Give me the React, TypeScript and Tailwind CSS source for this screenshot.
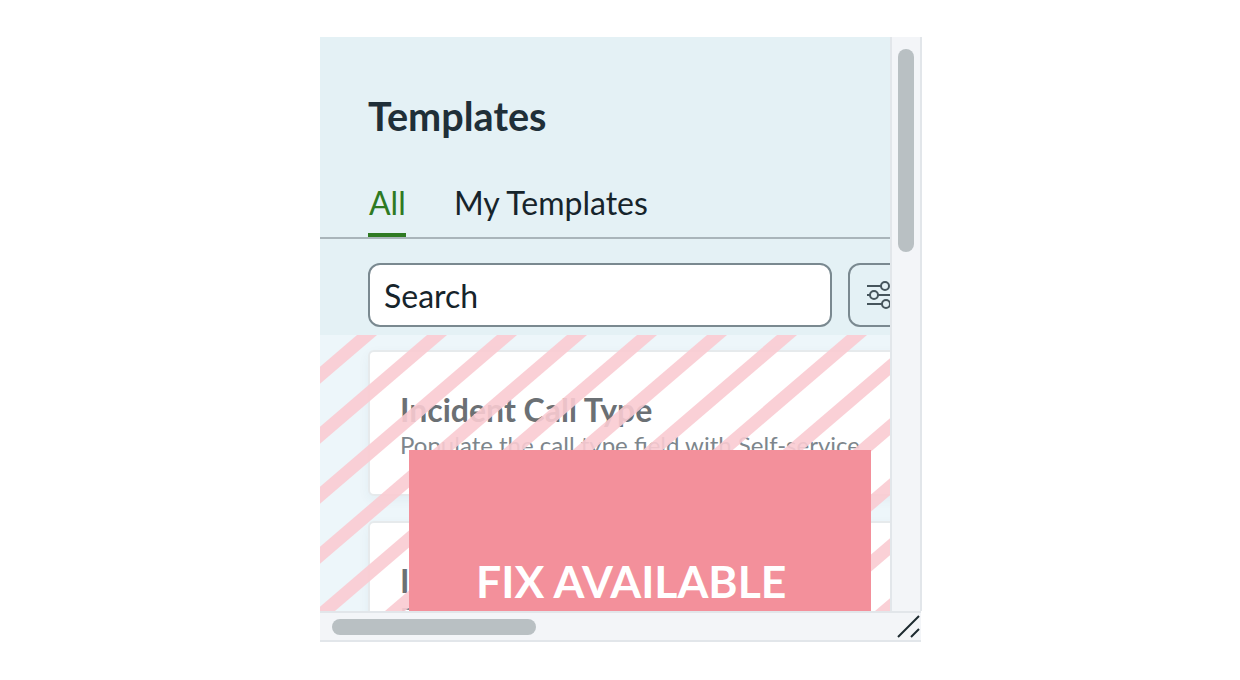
import React from "react";

function Card({ mt }: { mt: string }) {
  return (
    <div className={`${mt} ml-[48px] h-[146px] w-[560px] shrink-0 rounded-[6px] border-2 border-[#e6eaec] bg-white pl-[30px] pt-[38px] shadow-[0_4px_12px_rgba(40,70,90,0.05)]`}>
      <div className="whitespace-nowrap text-[32px] font-bold leading-[40px] text-[#6b7074]">Incident Call Type</div>
      <div className="whitespace-nowrap text-[24px] leading-[30px] text-[#7d868c]">Populate the call type field with Self-service</div>
    </div>
  );
}

export default function App() {
  const stripes = Array.from({ length: 14 }, (_, k) => 47 + 70 * k);
  return (
    <div className="h-[680px] w-[1240px] overflow-hidden bg-white pl-[320px] pt-[37px] font-['Lato','Liberation_Sans',sans-serif]">
      <div className="flex h-[605px] w-[602px] flex-col">
        <div className="flex h-[574px] w-full">
          <div className="relative h-full w-[570px] overflow-hidden bg-[#edf6fa]">
            <div className="h-[298px] bg-[#e4f1f5]">
              <h1 className="pl-[48px] pt-[55px] text-[39.6px] font-bold leading-[48px] text-[#1f2f38]">Templates</h1>
              <div className="mt-[43px] flex h-[56px] border-b-2 border-[#a9b5ba] pl-[48px] text-[32px] leading-[40px]">
                <div className="h-[54px] w-[38px] border-b-[4px] border-[#2e7a22] pl-[1px] text-[#2e7a22]">All</div>
                <div className="ml-[48px] whitespace-nowrap text-[#16242b]">My Templates</div>
              </div>
              <div className="mt-[24px] flex pl-[48px]">
                <div className="flex h-[64px] w-[464px] shrink-0 items-center rounded-[12px] border-2 border-[#7a8990] bg-white pl-[14px] pt-[2px] text-[32px] text-[#16242b]">Search</div>
                <div className="ml-[16px] flex h-[64px] w-[64px] shrink-0 rounded-[12px] border-2 border-[#7a8990] pl-[16px] pt-[16px]">
                  <svg width="26" height="28" viewBox="0 0 26 28" fill="none" stroke="#46555c" strokeWidth="2">
                    <path d="M1 5h14M1 14h3M12 14h14M1 23h15" />
                    <circle cx="19" cy="5" r="4" />
                    <circle cx="8" cy="14" r="4" />
                    <circle cx="20" cy="23" r="4" />
                  </svg>
                </div>
              </div>
            </div>
            <Card mt="mt-[15px]" />
            <Card mt="mt-[25px]" />
            <svg className="absolute left-0 top-[298px]" width="570" height="276" viewBox="0 0 570 276">
              {stripes.map((x) => (
                <line key={x} x1={x + 35} y1={-30} x2={x - 357} y2={306} stroke="#f9cbd2" strokeOpacity="0.9" strokeWidth="13" />
              ))}
            </svg>
            <div className="absolute left-[89px] top-[413px] flex h-[161px] w-[462px] items-end bg-[#f3909b] pb-[2px] pl-[67px] text-[44.5px] font-bold leading-[56px] text-white">
              FIX AVAILABLE
            </div>
          </div>
          <div className="flex w-[32px] shrink-0 border-x-2 border-[#e2e6ea] bg-[#f3f5f8] pl-[6px] pt-[12px]">
            <div className="h-[203px] w-[16px] rounded-[8px] bg-[#b9c0c3]" />
          </div>
        </div>
        <div className="flex h-[31px] w-[601px] items-center justify-between border-y-2 border-[#e2e6ea] bg-[#f3f5f8] pl-[12px] pr-[1px]">
          <div className="h-[16px] w-[204px] rounded-[8px] bg-[#b9c0c3]" />
          <svg width="23" height="23" viewBox="0 0 23 23" fill="none" stroke="#1d2a30" strokeWidth="2">
            <path d="M1 22 L22 1 M14 22 L22 14" />
          </svg>
        </div>
      </div>
    </div>
  );
}
